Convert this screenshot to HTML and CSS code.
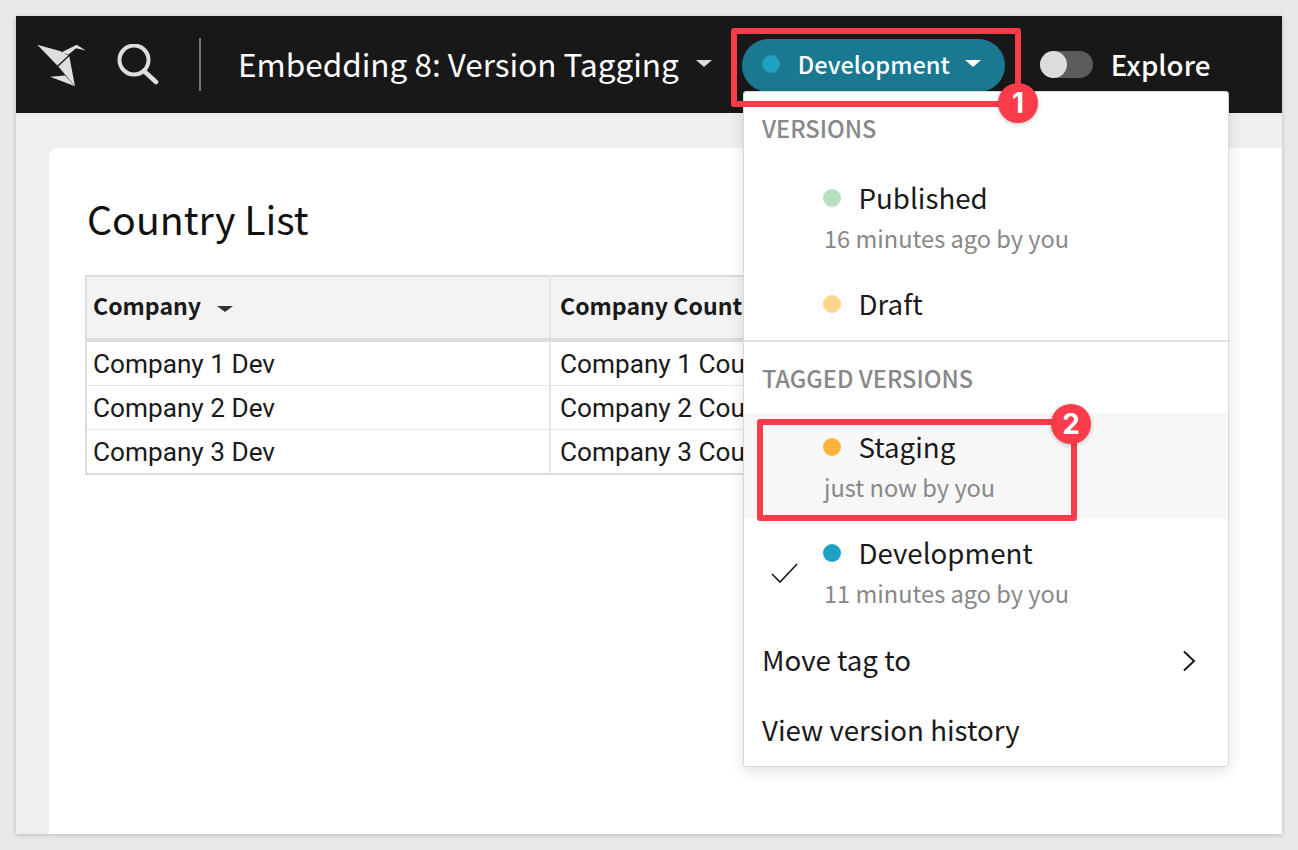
FILE: index.html

```html
<!DOCTYPE html>
<html lang="en">
<head>
    <meta charset="UTF-8">
    <title>Embedding 8: Version Tagging</title>
    <link rel="stylesheet" href="styles.css">
</head>
<body>
    <div class="window">
        <header class="topbar">
            <svg class="logo" width="50" height="46" viewBox="0 0 50 46">
                <g fill="#dedede">
                    <polygon points="0.3,2.8 23.7,9.2 31.3,13.5 20.3,23.5"/>
                    <polygon points="24.7,10.2 39.7,2.8 48.7,8.5 39,6.2 31.3,12.8"/>
                    <polygon points="21.3,24.5 32.3,14.2 38,44.2"/>
                    <polygon points="13,34.8 28,33.5 38,44.2"/>
                </g>
            </svg>
            <svg class="search" width="42" height="44" viewBox="0 0 42 44">
                <circle cx="17" cy="16" r="14.5" fill="none" stroke="#dedede" stroke-width="4"/>
                <line x1="27" y1="27" x2="39" y2="38" stroke="#dedede" stroke-width="4.5" stroke-linecap="round"/>
            </svg>
            <div class="divider"></div>
            <div class="title">Embedding 8: Version Tagging</div>
            <span class="caret caret-title"></span>
            <div class="pill">
                <span class="dot dot-dev"></span>
                <span class="pill-label">Development</span>
                <span class="caret caret-pill"></span>
            </div>
            <div class="toggle"><span class="knob"></span></div>
            <div class="explore">Explore</div>
        </header>

        <main class="content">
            <section class="card">
                <h1>Country List</h1>
                <table class="grid">
                    <thead>
                        <tr>
                            <th class="col-a">Company <span class="caret caret-th"></span></th>
                            <th class="col-b">Company Country</th>
                        </tr>
                    </thead>
                    <tbody>
                        <tr><td>Company 1 Dev</td><td class="col-b">Company 1 Country</td></tr>
                        <tr><td>Company 2 Dev</td><td class="col-b">Company 2 Country</td></tr>
                        <tr><td>Company 3 Dev</td><td class="col-b">Company 3 Country</td></tr>
                    </tbody>
                </table>
            </section>
        </main>

        <div class="menu">
            <div class="menu-head menu-head-first">VERSIONS</div>
            <div class="version">
                <div class="version-name"><span class="dot dot-pub"></span>Published</div>
                <div class="version-sub">16 minutes ago by you</div>
            </div>
            <div class="version version-short">
                <div class="version-name"><span class="dot dot-draft"></span>Draft</div>
            </div>
            <div class="menu-line"></div>
            <div class="menu-head">TAGGED VERSIONS</div>
            <div class="version version-hover">
                <div class="version-name"><span class="dot dot-stage"></span>Staging</div>
                <div class="version-sub">just now by you</div>
            </div>
            <div class="version">
                <svg class="check" width="30" height="24" viewBox="0 0 30 24">
                    <path d="M2 13 L10 21 L27 3" fill="none" stroke="#1a1a1a" stroke-width="1.6"/>
                </svg>
                <div class="version-name"><span class="dot dot-dev2"></span>Development</div>
                <div class="version-sub">11 minutes ago by you</div>
            </div>
            <div class="menu-item">
                Move tag to
                <svg class="chevron" width="14" height="22" viewBox="0 0 14 22">
                    <path d="M2 1.5 L12 11 L2 20.5" fill="none" stroke="#1a1a1a" stroke-width="2"/>
                </svg>
            </div>
            <div class="menu-item">View version history</div>
        </div>

        <div class="mark mark-one"></div>
        <div class="badge badge-one">1</div>
        <div class="mark mark-two"></div>
        <div class="badge badge-two">2</div>
    </div>
</body>
</html>
```

FILE: styles.css

```css
html, body {
    margin: 0;
    height: 850px;
    overflow: hidden;
}
body {
    background: #e9e9e9;
    padding: 16px;
    box-sizing: border-box;
    font-family: "Noto Sans CJK SC", "Noto Sans", sans-serif;
    color: #1a1a1a;
}
.window {
    position: relative;
    height: 818px;
    background: #efefef;
    box-shadow: 0 1px 5px rgba(0,0,0,0.2);
    overflow: hidden;
}
.topbar {
    display: flex;
    align-items: center;
    height: 97px;
    background: #181818;
    padding-left: 21px;
    color: #fff;
}
.logo {
    margin-right: 30px;
}
.search {
    margin-right: 40px;
    margin-top: 2px;
}
.divider {
    width: 2px;
    height: 53px;
    background: #777;
    margin-right: 37px;
}
.title {
    font-size: 31.5px;
    line-height: 44px;
    margin-top: -4px;
}
.caret {
    display: inline-block;
    width: 0;
    height: 0;
    border-left: 8px solid transparent;
    border-right: 8px solid transparent;
    border-top: 7px solid #ddd;
}
.caret-title {
    margin-left: 17px;
    margin-right: 30px;
    margin-top: -3px;
}
.pill {
    display: flex;
    align-items: center;
    width: 263px;
    height: 53px;
    margin-top: 2px;
    box-sizing: border-box;
    padding: 0 0 4px 20px;
    border-radius: 27px;
    background: #1a7890;
}
.dot {
    display: inline-block;
    flex: none;
    width: 18px;
    height: 18px;
    border-radius: 50%;
}
.dot-dev {
    background: #1fa1c4;
    margin-right: 18px;
}
.pill-label {
    font-size: 23.6px;
    font-weight: 500;
    line-height: 36px;
}
.caret-pill {
    margin-left: 15px;
    border-top-color: #fff;
}
.toggle {
    width: 53px;
    height: 27px;
    margin-left: 35px;
    margin-right: 18px;
    border-radius: 14px;
    background: #5c5c5c;
}
.knob {
    display: block;
    width: 27px;
    height: 27px;
    border-radius: 50%;
    background: #dcdcdc;
}
.explore {
    font-size: 27.7px;
    font-weight: 500;
    line-height: 40px;
    margin-top: -2px;
}
.content {
    padding: 35px 0 0 33px;
}
.card {
    height: 700px;
    background: #fff;
    border-radius: 8px 0 0 0;
    padding: 45px 0 0 36px;
}
.card h1 {
    margin: 0 0 32px 2px;
    font-size: 39.3px;
    font-weight: 400;
    line-height: 50px;
    color: #111;
}
.grid {
    border-collapse: collapse;
    table-layout: fixed;
    width: 716px;
    font-family: Roboto, sans-serif;
    border: 2px solid #dcdcdc;
}
.grid th, .grid td {
    padding: 0 0 0 6px;
    text-align: left;
    white-space: nowrap;
    overflow: hidden;
    border-right: 2px solid #e6e6e6;
}
.grid th {
    height: 56px;
    padding-bottom: 5px;
    background: #f3f3f3;
    font-family: "Noto Sans CJK SC", "Noto Sans", sans-serif;
    font-size: 23.1px;
    font-weight: 700;
    line-height: 36px;
    border-bottom: 4px solid #dcdcdc;
}
.grid td {
    height: 43px;
    font-size: 26.2px;
    border-top: 1px solid #e6e6e6;
}
.col-a {
    width: 456px;
}
.grid .col-b {
    padding-left: 9px;
}
.caret-th {
    margin-left: 11px;
    vertical-align: middle;
    border-left-width: 8px;
    border-right-width: 8px;
    border-top: 6px solid #333;
}
.menu {
    position: absolute;
    left: 727px;
    top: 75px;
    width: 486px;
    height: 676px;
    box-sizing: border-box;
    background: #fff;
    border: 1px solid #d8d8d8;
    border-radius: 3px;
    box-shadow: 0 4px 14px rgba(0,0,0,0.12);
}
.menu-head {
    height: 71px;
    box-sizing: border-box;
    padding: 18px 0 0 18px;
    font-size: 23.6px;
    font-weight: 500;
    line-height: 36px;
    color: #888;
}
.menu-head-first {
    height: 72px;
}
.version {
    position: relative;
    height: 106px;
    box-sizing: border-box;
    padding: 15px 0 0 79px;
}
.version-short {
    height: 70px;
}
.version-hover {
    background: #f7f7f7;
}
.version-name {
    display: flex;
    align-items: center;
    font-size: 27.7px;
    line-height: 36px;
}
.version-name .dot {
    margin-right: 17.5px;
    margin-top: 2px;
}
.version-sub {
    margin-top: 5px;
    padding-left: 1px;
    font-size: 23.6px;
    line-height: 36px;
    color: #888;
}
.dot-pub { background: #b6e0bd; }
.dot-draft { background: #fdd48a; }
.dot-stage { background: #fdb23e; }
.dot-dev2 { background: #1fa1c4; }
.check {
    position: absolute;
    left: 26px;
    top: 42px;
}
.menu-line {
    height: 2px;
    background: #e2e2e2;
}
.menu-item {
    display: flex;
    align-items: center;
    justify-content: space-between;
    height: 70px;
    box-sizing: border-box;
    padding: 0 32px 2px 18px;
    font-size: 27.7px;
}
.chevron {
    margin-top: 4px;
}
.mark {
    position: absolute;
    box-sizing: border-box;
    border: 6px solid #fb3b49;
    border-radius: 3px;
}
.mark-one {
    left: 715px;
    top: 12px;
    width: 290px;
    height: 79px;
}
.mark-two {
    left: 741px;
    top: 403px;
    width: 320px;
    height: 102px;
}
.badge {
    position: absolute;
    width: 40px;
    height: 40px;
    border-radius: 50%;
    background: #fb3b49;
    color: #fff;
    font-family: Inter, sans-serif;
    font-size: 28px;
    font-weight: 700;
    line-height: 40px;
    text-align: center;
    box-shadow: 0 1px 4px rgba(0,0,0,0.25);
}
.badge-one {
    left: 982px;
    top: 67px;
}
.badge-two {
    left: 1035px;
    top: 388px;
}
```
